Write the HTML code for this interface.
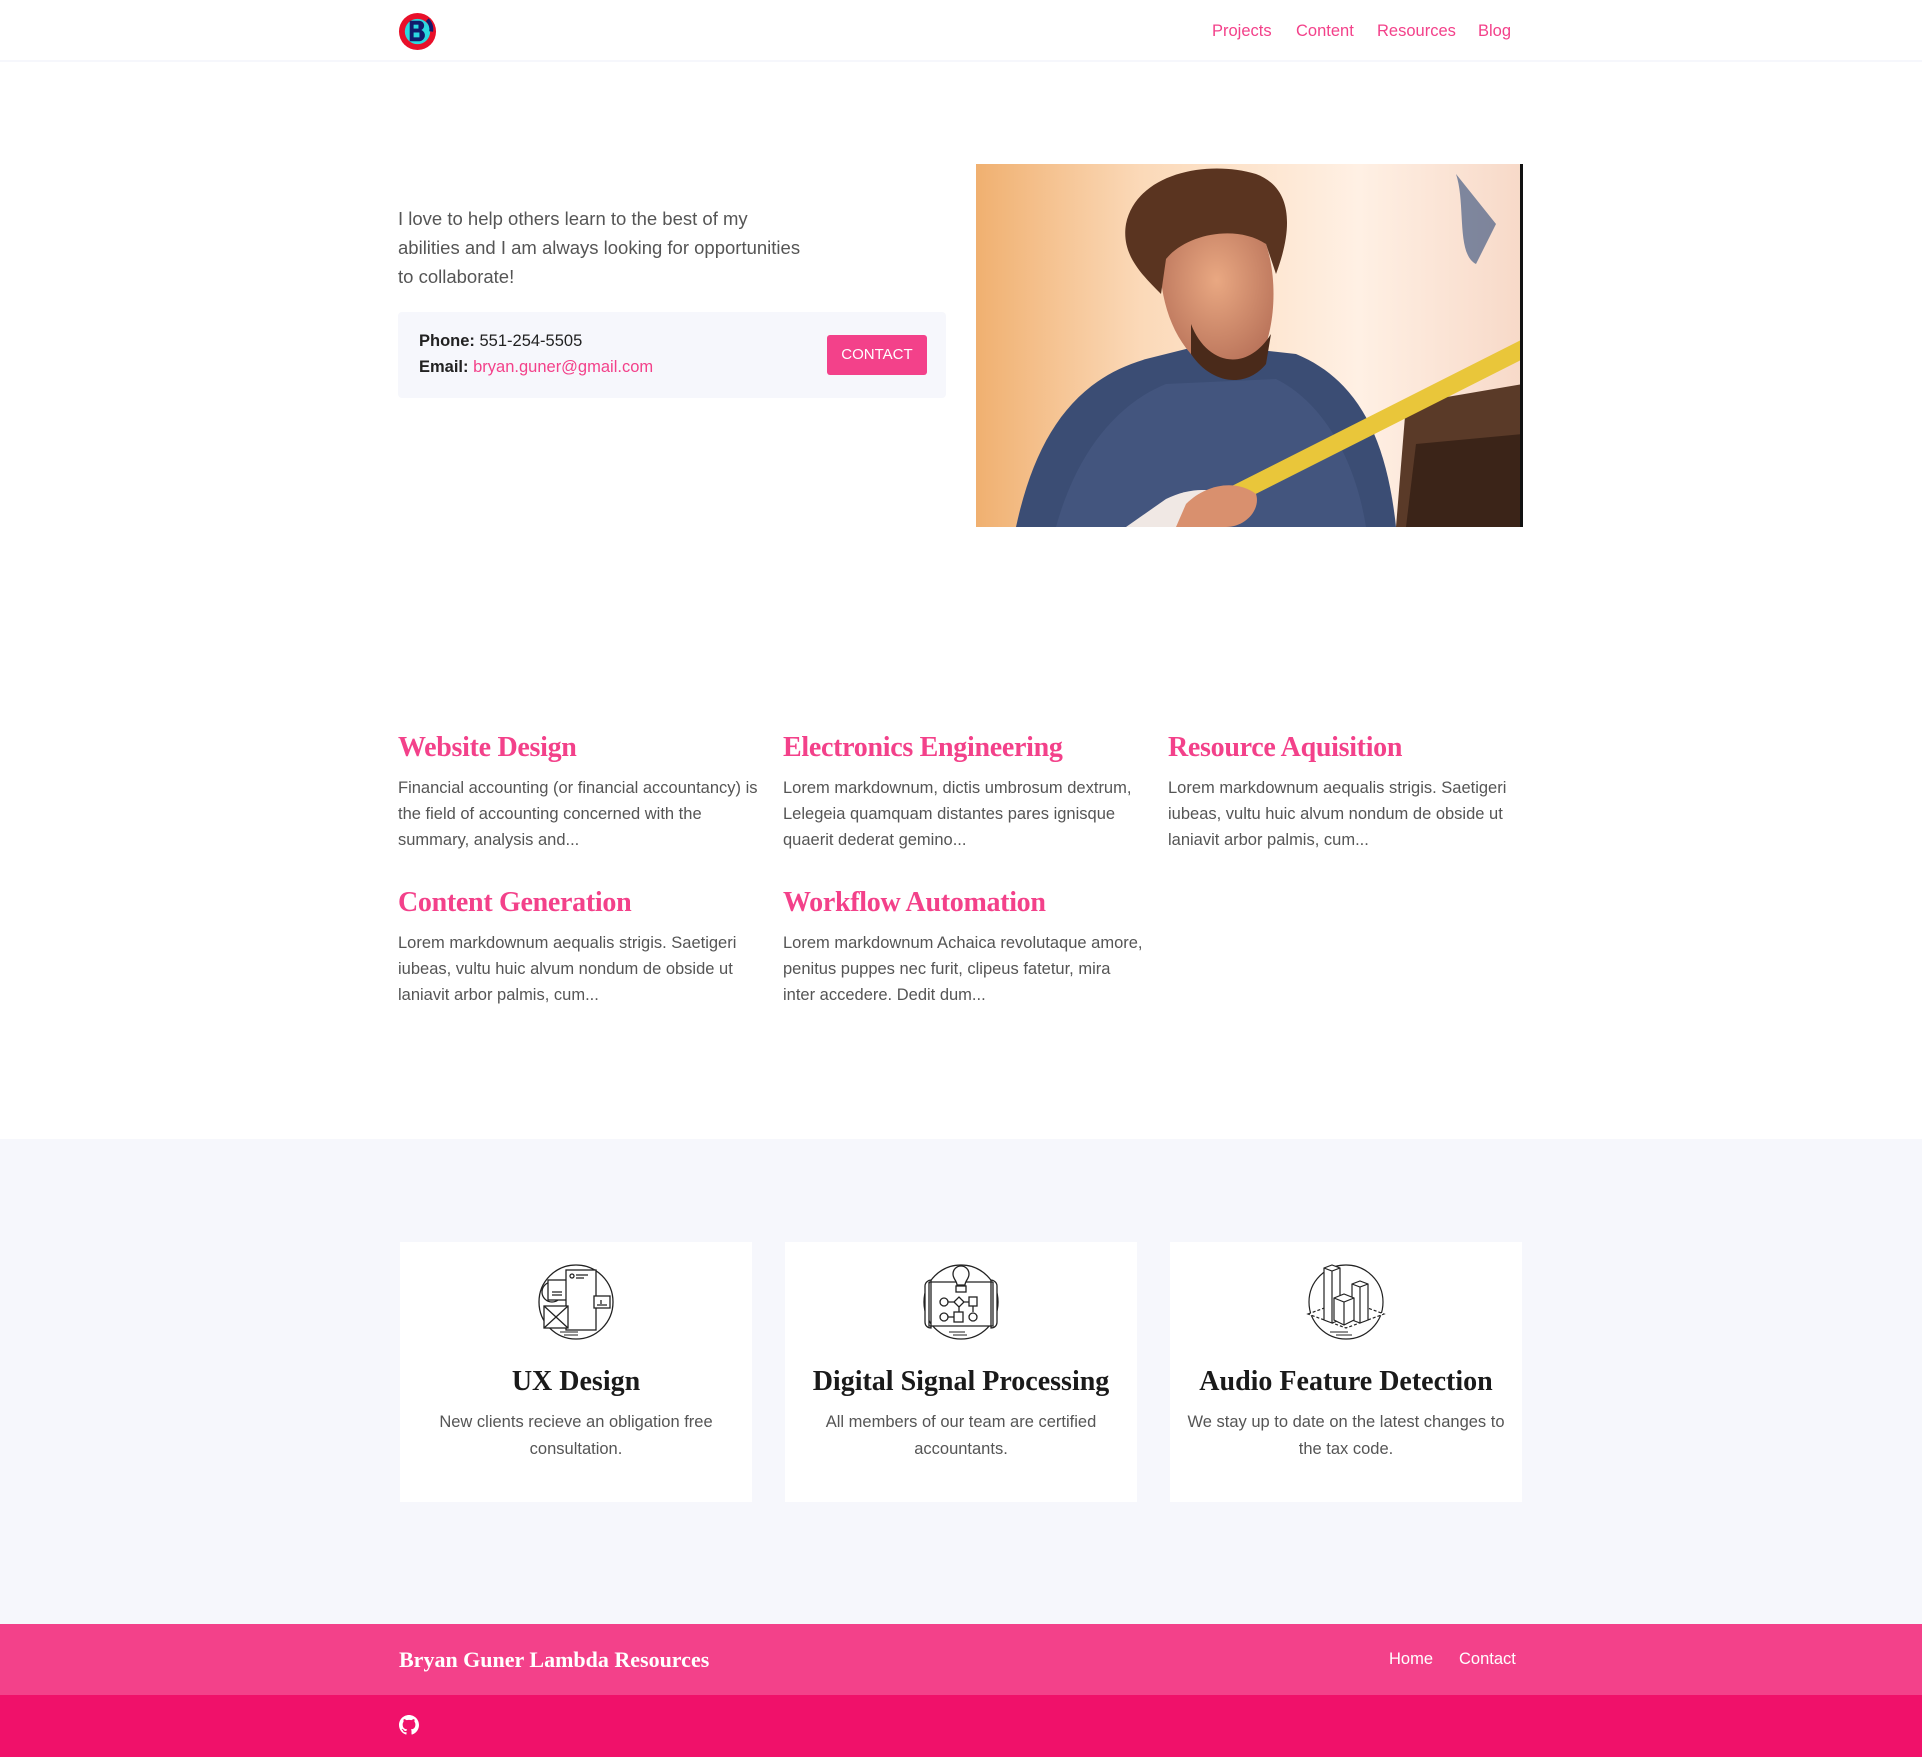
<!DOCTYPE html>
<html><head><meta charset="utf-8">
<style>
*{margin:0;padding:0;box-sizing:border-box}
html,body{width:1922px;height:1757px;overflow:hidden;background:#fff;font-family:"Liberation Sans",sans-serif;color:#555}
.abs{position:absolute}
nav{position:absolute;left:0;top:0;width:1922px;height:62px;border-bottom:2px solid #f6f7fc;background:#fff}
nav a{position:absolute;top:22px;font-size:16.5px;color:#f3418a;text-decoration:none}
.hero{left:398px;top:204px;width:520px;white-space:nowrap;font-size:18.5px;line-height:29px;color:#555}
.cbox{left:398px;top:312px;width:548px;height:86px;background:#f6f7fc;border-radius:4px}
.cbox .l{position:absolute;left:21px;font-size:16.5px;color:#222}
.btn{position:absolute;left:429px;top:23px;width:100px;height:40px;background:#f3418a;color:#fff;border-radius:3px;font-size:15px;text-align:center;line-height:40px}
.svc h3{font-family:"Liberation Serif",serif;font-weight:bold;font-size:28px;color:#f3418a;position:absolute;white-space:nowrap;letter-spacing:-0.3px}
.svc p{position:absolute;width:360px;font-size:16.5px;line-height:26px;color:#555}
.gray{left:0;top:1139px;width:1922px;height:485px;background:#f6f7fc}
.card{position:absolute;top:1242px;width:352px;height:260px;background:#fff;text-align:center}
.card svg{position:absolute;left:134px;top:18px}
.card h4{position:absolute;left:0;right:0;top:124px;font-family:"Liberation Serif",serif;font-weight:bold;font-size:28px;color:#1a1a1a}
.card p{position:absolute;left:16px;right:16px;top:167px;font-size:16.5px;line-height:27px;color:#555}
.f1{left:0;top:1624px;width:1922px;height:71px;background:#f3418a}
.f2{left:0;top:1695px;width:1922px;height:62px;background:#f0116a}
</style></head><body>
<nav>
<svg class="abs" style="left:398px;top:12px" width="39" height="39" viewBox="0 0 40 40">
<circle cx="20" cy="20" r="19" fill="#e8102a"/>
<circle cx="20" cy="20" r="13" fill="#2bd9e0"/>
<path d="M12 9h10a5 5 0 0 1 2 9.5a6 6 0 0 1-2 11.5H12z" fill="#111c6b"/>
<rect x="16" y="13" width="5" height="4" fill="#2bd9e0"/><rect x="16" y="21" width="6" height="5" fill="#2bd9e0"/>
<path d="M30 8a14 14 0 0 1 4 12" stroke="#111c6b" stroke-width="4" fill="none"/>
</svg>
<a style="left:1212px">Projects</a><a style="left:1296px">Content</a><a style="left:1377px">Resources</a><a style="left:1478px">Blog</a>
</nav>

<div class="abs hero">I love to help others learn to the best of my<br>abilities and I am always looking for opportunities<br>to collaborate!</div>
<div class="abs cbox">
<div class="l" style="top:20px"><b>Phone:</b> 551-254-5505</div>
<div class="l" style="top:46px"><b>Email:</b> <span style="color:#f3418a">bryan.guner@gmail.com</span></div>
<div class="btn">CONTACT</div>
</div>

<svg class="abs" style="left:976px;top:164px" width="547" height="363" viewBox="0 0 547 363">
<defs>
<linearGradient id="bg" x1="0" y1="0" x2="1" y2="0"><stop offset="0" stop-color="#f0b070"/><stop offset=".3" stop-color="#fbd9b8"/><stop offset=".7" stop-color="#fff0e4"/><stop offset="1" stop-color="#f7d9c8"/></linearGradient>
<radialGradient id="sk" cx=".5" cy=".4" r=".6"><stop offset="0" stop-color="#e9a882"/><stop offset="1" stop-color="#b9735a"/></radialGradient>
</defs>
<rect width="547" height="363" fill="url(#bg)"/>
<path d="M430 240 L547 220 L547 363 L420 363 Z" fill="#5a3a28"/>
<path d="M440 280 L547 270 L547 363 L430 363Z" fill="#3b2418"/>
<path d="M480 10 C490 40 480 90 500 100 L520 60 Z" fill="#2c4a7a" opacity=".6"/>
<path d="M40 363 C60 270 100 215 170 195 L230 180 L320 190 C380 215 410 270 420 363 Z" fill="#3b4d74"/>
<path d="M80 363 C100 290 140 240 190 220 L300 215 C350 240 380 300 390 363Z" fill="#4a5c85" opacity=".6"/>
<path d="M185 70 C180 120 190 170 225 200 C250 215 275 205 290 180 C300 150 300 110 290 80 C260 50 210 50 185 70Z" fill="url(#sk)"/>
<path d="M215 160 C230 200 270 210 295 170 L290 200 C270 225 235 220 215 190Z" fill="#4a2a1a"/>
<path d="M150 60 C160 10 230 -5 280 10 C320 25 315 70 300 110 L290 80 C260 60 210 70 190 95 L185 130 C165 110 145 90 150 60Z" fill="#5a3420"/>
<path d="M547 175 L547 195 L240 350 L230 335 Z" fill="#e9c63a"/>
<path d="M150 363 L190 335 C220 320 250 325 260 340 L240 363Z" fill="#f0e8e4"/>
<path d="M210 340 C230 320 260 315 280 330 C285 345 270 363 250 363 L200 363Z" fill="#d9906e"/>
<rect x="544" y="0" width="3" height="363" fill="#111"/>
</svg>

<div class="svc">
<h3 style="left:398px;top:732px">Website Design</h3>
<p style="left:398px;top:775px">Financial accounting (or financial accountancy) is the field of accounting concerned with the summary, analysis and...</p>
<h3 style="left:783px;top:732px">Electronics Engineering</h3>
<p style="left:783px;top:775px">Lorem markdownum, dictis umbrosum dextrum, Lelegeia quamquam distantes pares ignisque quaerit dederat gemino...</p>
<h3 style="left:1168px;top:732px">Resource Aquisition</h3>
<p style="left:1168px;top:775px">Lorem markdownum aequalis strigis. Saetigeri iubeas, vultu huic alvum nondum de obside ut laniavit arbor palmis, cum...</p>
<h3 style="left:398px;top:887px">Content Generation</h3>
<p style="left:398px;top:930px">Lorem markdownum aequalis strigis. Saetigeri iubeas, vultu huic alvum nondum de obside ut laniavit arbor palmis, cum...</p>
<h3 style="left:783px;top:887px">Workflow Automation</h3>
<p style="left:783px;top:930px">Lorem markdownum Achaica revolutaque amore, penitus puppes nec furit, clipeus fatetur, mira inter accedere. Dedit dum...</p>
</div>

<div class="abs gray"></div>
<div class="card" style="left:400px">
<svg width="84" height="84" viewBox="0 0 84 84" fill="#fff" stroke="#222" stroke-width="1.3">
<circle cx="42" cy="42" r="37"/>
<circle cx="18" cy="32" r="10"/>
<rect x="14" y="20" width="20" height="20"/>
<rect x="32" y="10" width="30" height="60"/>
<rect x="60" y="36" width="16" height="12"/>
<rect x="10" y="46" width="24" height="22"/><path d="M10 46L34 68M34 46L10 68"/>
<path d="M26 72h18M30 75h14" stroke-width="1"/>
<circle cx="38" cy="16" r="2"/><path d="M42 15h12M42 18h8M18 32h10M18 35h10M67 40v4M63 45h10"/>
</svg>
<h4>UX Design</h4>
<p>New clients recieve an obligation free consultation.</p>
</div>
<div class="card" style="left:785px">
<svg width="84" height="84" viewBox="0 0 84 84" fill="#fff" stroke="#222" stroke-width="1.3">
<circle cx="42" cy="42" r="37"/>
<path d="M10 22h64M10 22v44h64v-44M6 26c0-4 4-6 6-6v48c-3 0-6-2-6-6zM78 26c0-4-4-6-6-6v48c3 0 6-2 6-6z"/>
<path d="M34 14a8 8 0 1 1 16 0c0 5-4 7-4 11h-8c0-4-4-6-4-11z"/>
<rect x="37" y="26" width="10" height="6"/>
<circle cx="25" cy="42" r="4"/><path d="M29 42h6l5-5 5 5-5 5-5-5M45 42h5"/><rect x="50" y="37" width="8" height="9"/><path d="M54 46v6"/>
<circle cx="25" cy="57" r="4"/><path d="M29 57h6"/><rect x="35" y="52" width="9" height="10"/><circle cx="54" cy="57" r="4"/><path d="M40 47v5"/>
<path d="M30 72h16M34 75h14" stroke-width="1"/>
</svg>
<h4>Digital Signal Processing</h4>
<p>All members of our team are certified accountants.</p>
</div>
<div class="card" style="left:1170px">
<svg width="84" height="84" viewBox="0 0 84 84" fill="#fff" stroke="#222" stroke-width="1.2">
<circle cx="42" cy="42" r="37"/>
<path d="M4 54L42 40L80 54L42 68Z" stroke-dasharray="3 2"/>
<path d="M20 8l8-3 8 3v52l-8 3-8-3z"/><path d="M28 11v52M20 8l8 3 8-3"/>
<path d="M48 24l8-3 8 3v36l-8 3-8-3z"/><path d="M56 27v36M48 24l8 3 8-3"/>
<path d="M30 38l10-4 10 4v22l-10 5-10-5z"/><path d="M40 42v23M30 38l10 4 10-4"/>
<path d="M26 72h18M32 75h16" stroke-width="1"/>
</svg>
<h4>Audio Feature Detection</h4>
<p>We stay up to date on the latest changes to the tax code.</p>
</div>

<div class="abs f1">
<div class="abs" style="left:399px;top:23px;font-family:'Liberation Serif',serif;font-weight:bold;font-size:22px;color:#fff">Bryan Guner Lambda Resources</div>
<div class="abs" style="left:1389px;top:26px;font-size:16.5px;color:#fff">Home</div>
<div class="abs" style="left:1459px;top:26px;font-size:16.5px;color:#fff">Contact</div>
</div>
<div class="abs f2">
<svg class="abs" style="left:399px;top:20px" width="20" height="20" viewBox="0 0 16 16"><path fill="#fff" d="M8 0C3.58 0 0 3.58 0 8c0 3.54 2.29 6.53 5.47 7.59.4.07.55-.17.55-.38 0-.19-.01-.82-.01-1.49-2.01.37-2.53-.49-2.69-.94-.09-.23-.48-.94-.82-1.13-.28-.15-.68-.52-.01-.53.63-.01 1.08.58 1.23.82.72 1.21 1.87.87 2.33.66.07-.52.28-.87.51-1.07-1.78-.2-3.64-.89-3.640-3.95 0-.87.31-1.59.82-2.15-.08-.2-.36-1.02.08-2.12 0 0 .67-.21 2.2.82.64-.18 1.32-.27 2-.27.68 0 1.36.09 2 .27 1.53-1.04 2.2-.82 2.2-.82.44 1.1.16 1.92.08 2.12.51.56.82 1.27.82 2.15 0 3.07-1.87 3.75-3.65 3.95.29.25.54.73.54 1.48 0 1.07-.01 1.93-.01 2.2 0 .21.15.46.55.38A8.013 8.013 0 0016 8c0-4.42-3.58-8-8-8z"/></svg>
</div>
</body></html>
